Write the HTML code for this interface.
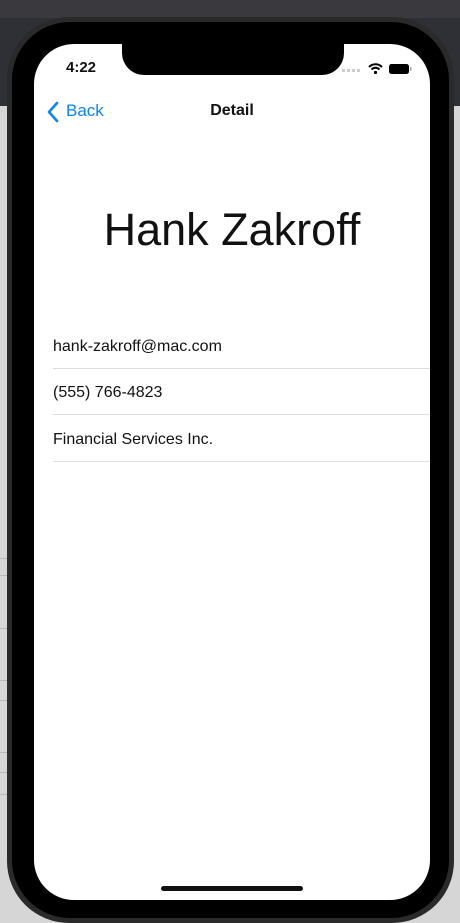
<!DOCTYPE html>
<html><head><style>
*{margin:0;padding:0;box-sizing:border-box}
body{width:460px;height:922px;overflow:hidden;position:relative;background:#d6d6d6;font-family:"Liberation Sans",sans-serif}
.top{position:absolute;left:0;top:0;width:460px;height:18px;background:#3a3a3e}
.band{position:absolute;left:0;top:18px;width:460px;height:88px;background:#2e3035}
.line{position:absolute;left:0;width:10px;height:1px;background:#b8b8b8}
.frame{position:absolute;left:7px;top:17px;width:447px;height:906px;border-radius:62px;background:#2a2a2b}
.inner{position:absolute;left:12px;top:22px;width:437px;height:896px;border-radius:58px;background:#000}
.screen{position:absolute;left:34px;top:44px;width:396px;height:856px;border-radius:40px;background:#fff;overflow:hidden}
.notch{position:absolute;left:88px;top:-1px;width:222px;height:32px;background:#000;border-radius:0 0 22px 22px}
.time{position:absolute;left:32px;top:15px;font-size:15px;font-weight:bold;color:#111}
.nav{position:absolute;top:57px;font-size:17px}
.name{position:absolute;left:0;width:396px;top:160px;text-align:center;font-size:45px;color:#111}
.row{position:absolute;left:19px;right:0;height:46px;border-bottom:1px solid #ddd;font-size:16px;color:#111;padding-top:15px}
.home{position:absolute;left:127px;bottom:9px;width:142px;height:5px;border-radius:3px;background:#111}
</style></head><body>
<div class="top"></div><div class="band"></div>
<div class="line" style="top:558px"></div><div class="line" style="top:575px"></div>
<div class="line" style="top:628px"></div><div class="line" style="top:680px"></div>
<div class="line" style="top:700px"></div><div class="line" style="top:752px"></div>
<div class="line" style="top:772px"></div><div class="line" style="top:794px"></div>
<div class="frame"></div><div class="inner"></div>
<div class="screen">
<div class="notch"></div>
<div class="time">4:22</div>
<svg style="position:absolute;left:308px;top:19px" width="70" height="12">
<g fill="#ccc"><rect x="0" y="6" width="3" height="3"/><rect x="5" y="6" width="3" height="3"/><rect x="10" y="6" width="3" height="3"/><rect x="15" y="6" width="3" height="3"/></g>
<path d="M27 4a9 9 0 0 1 13 0M29.5 6.5a5.5 5.5 0 0 1 8 0" stroke="#000" stroke-width="2" fill="none"/><circle cx="33.5" cy="9.5" r="1.6"/>
<rect x="47" y="1" width="20" height="10" rx="2.5" fill="#000"/><rect x="68" y="4" width="1.5" height="4" fill="#aaa"/>
</svg>
<svg style="position:absolute;left:12px;top:57px" width="14" height="22"><path d="M11 2L3 11l8 9" stroke="#0a84ff" stroke-width="2.6" fill="none" stroke-linecap="round" stroke-linejoin="round"/></svg>
<div class="nav" style="left:32px;color:#0a84ff">Back</div>
<div class="nav" style="left:0;width:396px;text-align:center;font-weight:bold;color:#111;font-size:16px;top:58px">Detail</div>
<div class="name">Hank Zakroff</div>
<div class="row" style="top:279px">hank-zakroff@mac.com</div>
<div class="row" style="top:325px">(555) 766-4823</div>
<div class="row" style="top:372px">Financial Services Inc.</div>
<div class="home"></div>
</div>
</body></html>
